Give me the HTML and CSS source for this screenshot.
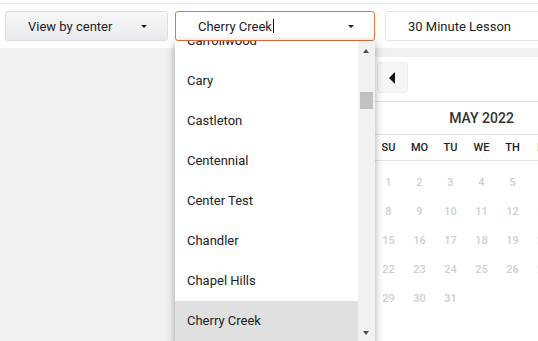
FILE: index.html
```html
<!DOCTYPE html>
<html lang="en">
<head>
    <meta charset="UTF-8">
    <meta name="viewport" content="width=device-width, initial-scale=1.0">
    <title>Book a Lesson</title>
    <link rel="stylesheet" href="styles.css">
</head>
<body>
    <div class="topbar"></div>

    <header class="filters">
        <div class="select select-view">
            <span>View by center</span>
            <span class="caret"></span>
        </div>
        <div class="select select-center">
            <span>Cherry Creek<span class="text-cursor"></span></span>
            <span class="caret"></span>

            <div class="dropdown">
                <ul class="options">
                    <li>Carrollwood</li>
                    <li>Cary</li>
                    <li>Castleton</li>
                    <li>Centennial</li>
                    <li>Center Test</li>
                    <li>Chandler</li>
                    <li>Chapel Hills</li>
                    <li class="active">Cherry Creek</li>
                    <li>Chesterfield</li>
                </ul>
                <div class="scrollbar">
                    <span class="arrow-up"></span>
                    <span class="thumb"></span>
                    <span class="arrow-down"></span>
                </div>
            </div>
        </div>
        <div class="select select-lesson">
            <span>30 Minute Lesson</span>
        </div>
    </header>

    <main class="main">
        <section class="calendar-card">
            <div class="calendar">
                <div class="calendar-nav">
                    <button class="nav-btn" aria-label="Previous month"><span class="arrow-left"></span></button>
                </div>
                <h2 class="month">MAY 2022</h2>
                <div class="weekdays">
                    <span>SU</span><span>MO</span><span>TU</span><span>WE</span><span>TH</span><span class="fri">FR</span><span>SA</span>
                </div>
                <div class="days">
                    <span>1</span><span>2</span><span>3</span><span>4</span><span>5</span><span>6</span><span>7</span>
                    <span>8</span><span>9</span><span>10</span><span>11</span><span>12</span><span>13</span><span>14</span>
                    <span>15</span><span>16</span><span>17</span><span>18</span><span>19</span><span>20</span><span>21</span>
                    <span>22</span><span>23</span><span>24</span><span>25</span><span>26</span><span>27</span><span>28</span>
                    <span>29</span><span>30</span><span>31</span>
                </div>
            </div>
        </section>
    </main>
</body>
</html>
```

FILE: styles.css
```css
* {
    margin: 0;
    padding: 0;
    box-sizing: border-box;
}

body {
    font-family: Roboto, 'Noto Sans', Arial, sans-serif;
    background: #eff0f2;
    color: #222;
    overflow: hidden;
    width: 538px;
    height: 341px;
}

.topbar {
    height: 4px;
    background: #fff;
    border-bottom: 1px solid #e3e4e6;
}

.filters {
    display: flex;
    gap: 7px;
    height: 44px;
    padding: 7px 0 0 5px;
    background: #fff;
    white-space: nowrap;
}

.select {
    position: relative;
    flex: none;
    display: flex;
    align-items: center;
    justify-content: space-between;
    height: 30px;
    padding: 0 20px 0 22px;
    font-size: 13px;
    color: #222;
    border: 1px solid #e2e4e7;
    border-radius: 3px;
    background: #fff;
}

.select-view {
    width: 163px;
    background: linear-gradient(to bottom, #f6f7f8, #e9ebee);
    border-color: #dcdfe3;
}

.select-center {
    width: 200px;
    border-color: #f0733a;
}

.select-lesson {
    width: 200px;
    margin-left: 3px;
}

.caret {
    width: 0;
    height: 0;
    border-left: 3px solid transparent;
    border-right: 3px solid transparent;
    border-top: 3px solid #222;
}

.text-cursor {
    display: inline-block;
    width: 1px;
    height: 14px;
    margin-left: 1px;
    vertical-align: -2px;
    background: #111;
}

/* open list of centers */
.dropdown {
    position: absolute;
    top: 29px;
    left: -1px;
    width: 200px;
    height: 305px;
    display: flex;
    background: #fff;
    box-shadow: 0 2px 8px rgba(0, 0, 0, 0.35);
    z-index: 10;
    overflow: hidden;
}

.options {
    list-style: none;
    flex: 1;
    margin-top: -20px;
}

.options li {
    height: 40px;
    line-height: 40px;
    padding-left: 12px;
    font-size: 13px;
    color: #222;
}

.options li.active {
    background: #e0e0e0;
}

.scrollbar {
    position: relative;
    width: 17px;
    background: #f1f1f1;
}

.arrow-up, .arrow-down {
    position: absolute;
    left: 5px;
    width: 0;
    height: 0;
    border-left: 3.5px solid transparent;
    border-right: 3.5px solid transparent;
}

.arrow-up {
    top: 8px;
    border-bottom: 4px solid #505050;
}

.arrow-down {
    top: 290px;
    border-top: 4px solid #505050;
}

.thumb {
    position: absolute;
    top: 51px;
    left: 2px;
    width: 13px;
    height: 17px;
    background: #c1c1c1;
}

.main {
    padding-top: 9px;
}

.calendar-card {
    margin-left: 340px;
    height: 300px;
    background: #fff;
    padding-left: 33px;
}

.calendar {
    width: 217px;
}

.calendar-nav {
    padding: 5px 0 8px 4px;
    border-bottom: 1px solid #e4e4e4;
    width: 300px;
}

.nav-btn {
    width: 31px;
    height: 31px;
    display: flex;
    align-items: center;
    justify-content: center;
    background: #f6f6f6;
    border: 1px solid #ececec;
    border-radius: 3px;
}

.arrow-left {
    width: 0;
    height: 0;
    border-top: 6px solid transparent;
    border-bottom: 6px solid transparent;
    border-right: 6px solid #111;
    margin-right: 2px;
}

.month {
    height: 33px;
    line-height: 33px;
    text-align: center;
    font-size: 14px;
    font-weight: 500;
    color: #333;
    border-bottom: 1px solid #e4e4e4;
    width: 300px;
    padding-right: 83px;
}

.weekdays {
    display: grid;
    grid-template-columns: repeat(7, 31px);
    height: 26px;
    align-items: center;
    font-size: 11px;
    font-weight: 500;
    color: #222;
    text-align: center;
    border-bottom: 1px solid #e4e4e4;
    width: 300px;
}

.weekdays .fri {
    color: #f3b37a;
}

.days {
    display: grid;
    grid-template-columns: repeat(7, 31px);
    grid-auto-rows: 29px;
    align-items: center;
    padding-top: 7px;
    font-size: 11px;
    font-weight: 500;
    color: #cfcfcf;
    text-align: center;
}
```
